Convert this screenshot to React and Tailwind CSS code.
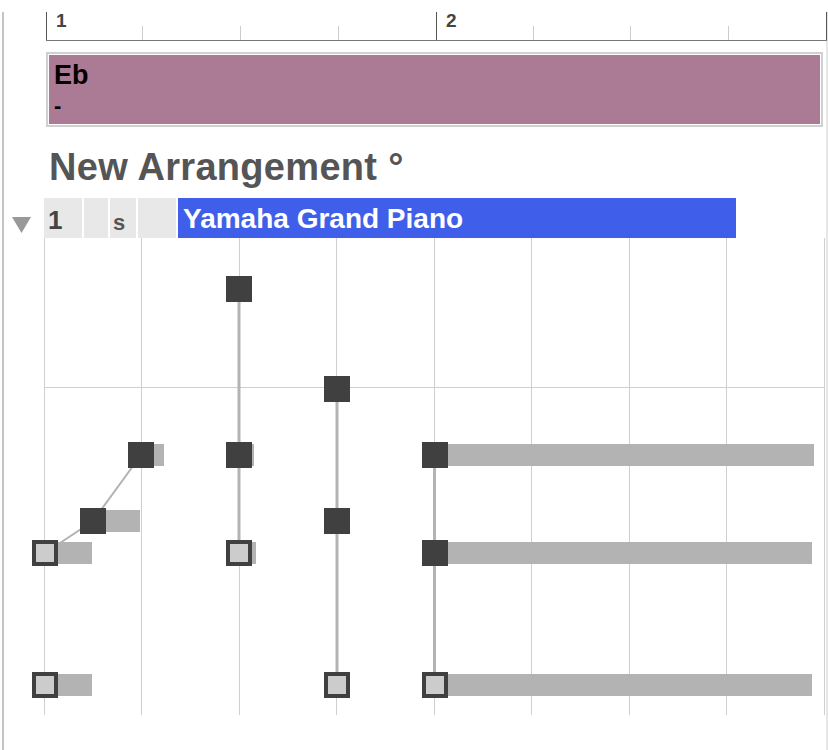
import React from 'react';

const BEATS = [44.5, 141.5, 239.5, 336.5, 434.5, 531.5, 629.5, 726.5];

const solidNotes = [
    [226, 276], [324, 376], [128, 442], [80, 508],
    [226, 442], [324, 508], [422, 442], [422, 540],
];
const hollowNotes = [[32, 540], [32, 672], [226, 540], [324, 672], [422, 672]];
const tails = [
    [154, 164, 444], [106, 140, 510], [58, 92, 542], [58, 92, 674],
    [252, 254, 444], [252, 256, 542], [448, 814, 444], [448, 812, 542], [448, 812, 674],
];
const stems = [[239, 289, 553], [337, 389, 685], [434.5, 455, 685]];

const Ruler = () => {
    // ticks relative to ruler left (x = 46 on the page)
    const minor = [96, 194, 292, 487, 584, 682];
    return (
        <div className="relative ml-[42px] mt-[12px] h-[29px] w-[781px] border-b border-[#777]">
            <div className="absolute left-0 top-0 h-full w-px bg-[#555]" />
            <div className="absolute left-[390px] top-0 h-full w-px bg-[#555]" />
            <div className="absolute right-0 top-0 h-full w-px bg-[#555]" />
            {minor.map((x) => (
                <div key={x} className="absolute bottom-0 h-[14px] w-px bg-[#ccc]" style={{ left: x }} />
            ))}
            <span className="absolute left-[10px] top-[-1px] text-[19px] font-bold leading-none text-[#444]">1</span>
            <span className="absolute left-[400px] top-[-1px] text-[19px] font-bold leading-none text-[#444]">2</span>
        </div>
    );
};

const PianoRoll = () => (
    <svg width="822" height="480" viewBox="4 238 822 480" className="block">
        {BEATS.map((x) => (
            <line key={x} x1={x} y1="238" x2={x} y2="715" stroke="#cfcfcf" strokeWidth="1" />
        ))}
        <line x1="824.5" y1="238" x2="824.5" y2="715" stroke="#cfcfcf" strokeWidth="1" />
        <line x1="44" y1="387.5" x2="824" y2="387.5" stroke="#cfcfcf" strokeWidth="1" />

        {stems.map(([x, y1, y2]) => (
            <line key={x} x1={x} y1={y1} x2={x} y2={y2} stroke="#b3b3b3" strokeWidth="3" />
        ))}
        <polyline points="45,553 93,521 141,455" fill="none" stroke="#b3b3b3" strokeWidth="2" />

        {tails.map(([x1, x2, y]) => (
            <rect key={`${x1}-${y}`} x={x1} y={y} width={x2 - x1} height="22" fill="#b3b3b3" />
        ))}
        {solidNotes.map(([x, y]) => (
            <rect key={`s${x}-${y}`} x={x} y={y} width="26" height="26" fill="#404040" />
        ))}
        {hollowNotes.map(([x, y]) => (
            <rect key={`h${x}-${y}`} x={x + 2} y={y + 2} width="22" height="22" fill="#cccccc" stroke="#404040" strokeWidth="4" />
        ))}
    </svg>
);

export default function App() {
    return (
        <div className="h-[750px] w-[828px] bg-white pl-[2px]" style={{ fontFamily: '"Liberation Sans", Arial, sans-serif' }}>
            <div className="h-full border-l-2 border-r-2 border-l-[#c4c4c4] border-r-[#e6e6e6]">
                <Ruler />

                <div className="ml-[42px] mt-[11px] h-[75px] w-[777px] border-2 border-[#d0d0d0] bg-white p-px">
                    <div className="h-full bg-[#ab7b96] px-[5px] pt-[5px] text-black">
                        <div className="text-[27px] font-bold leading-[30px]">Eb</div>
                        <div className="mt-[5px] text-[22px] font-bold leading-[22px]">-</div>
                    </div>
                </div>

                <h1 className="ml-[45px] mt-[18px] h-[44px] text-[38px] font-bold leading-[44px] tracking-[0.3px] text-[#555]">New Arrangement °</h1>

                <div className="mt-[9px] flex h-[40px] items-stretch">
                    <div className="flex w-[40px] items-center pl-[8px] pt-[14px]">
                        <svg width="19" height="16" viewBox="0 0 19 16">
                            <polygon points="0,0 19,0 9.5,16" fill="#999" />
                        </svg>
                    </div>
                    <div className="flex w-[38px] items-center bg-[#e8e8e8] pl-[4px] pt-[5px] text-[26px] font-bold text-[#444]">1</div>
                    <div className="ml-[2px] w-[24px] bg-[#e8e8e8]" />
                    <div className="ml-[2px] flex w-[26px] items-center bg-[#e8e8e8] pl-[3px] pt-[8px] text-[22px] font-bold text-[#555]">s</div>
                    <div className="ml-[2px] w-[38px] bg-[#e8e8e8]" />
                    <div className="ml-[2px] flex w-[558px] items-center bg-[#3f5fea] pl-[5px] pt-[2px] text-[28px] font-bold text-white">
                        Yamaha Grand Piano
                    </div>
                </div>

                <PianoRoll />
            </div>
        </div>
    );
}
